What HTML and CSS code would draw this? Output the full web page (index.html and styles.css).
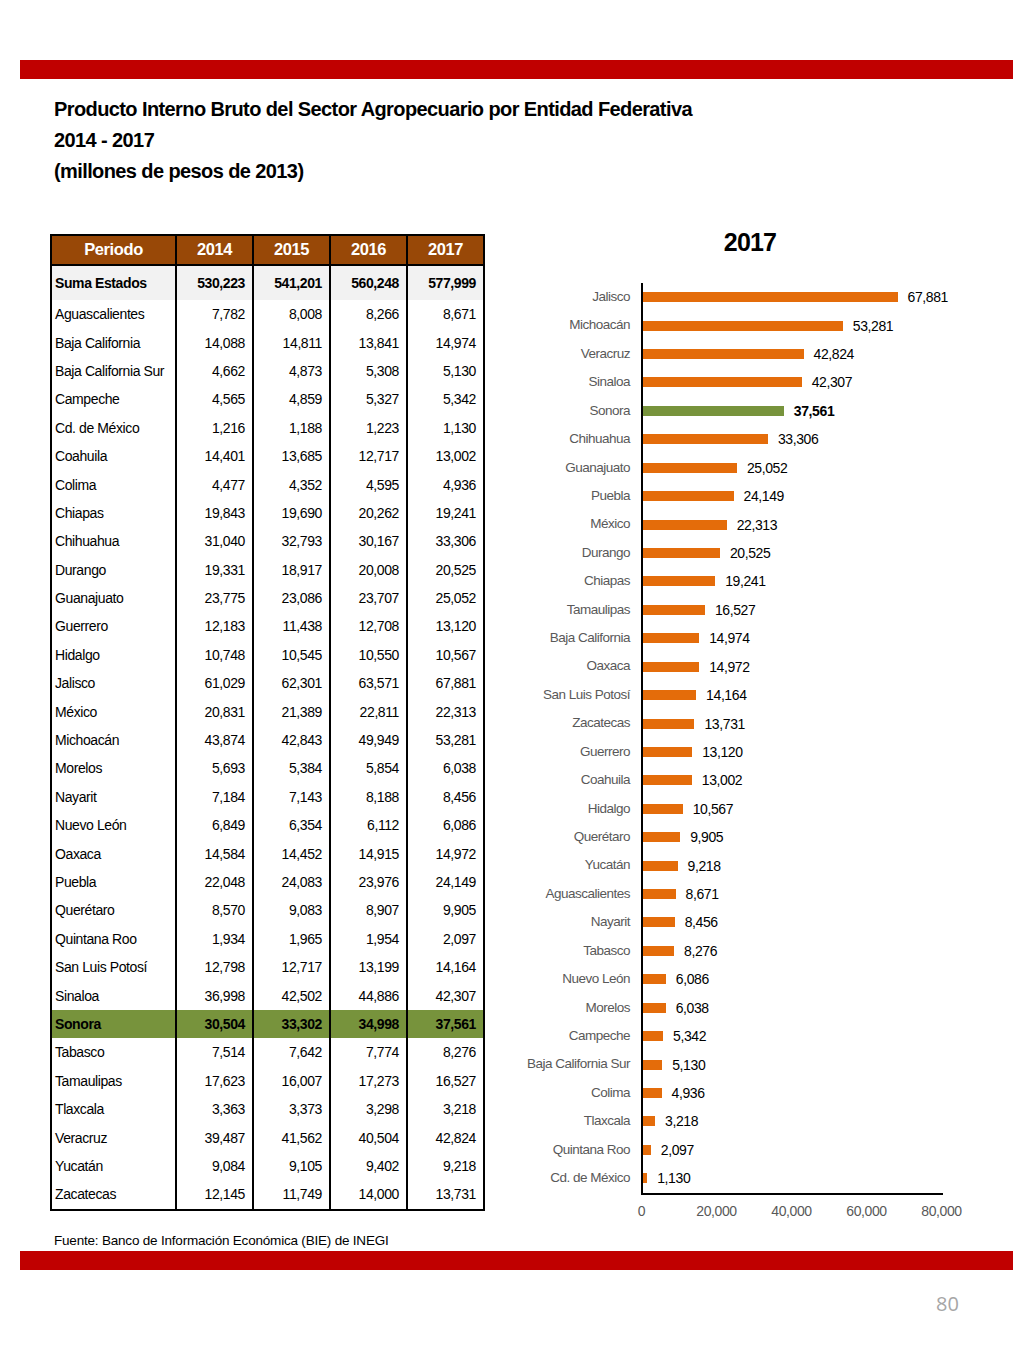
FILE: index.html
```html
<!DOCTYPE html>
<html lang="es">
<head>
<meta charset="utf-8">
<title>PIB Sector Agropecuario</title>
<link rel="stylesheet" href="styles.css">
</head>
<body>
<div class="page">
  <div class="redbar top"></div>
  <div class="heading">
    <div>Producto Interno Bruto del Sector Agropecuario por Entidad Federativa</div>
    <div>2014 - 2017</div>
    <div>(millones de pesos de 2013)</div>
  </div>
  <div class="main">
    <div class="left">
      <table class="data">
        <colgroup><col class="c0"><col class="cn"><col class="cn"><col class="cn"><col class="cn"></colgroup>
        <thead>
          <tr><th>Periodo</th><th>2014</th><th>2015</th><th>2016</th><th>2017</th></tr>
        </thead>
        <tbody>
          <tr class="total"><td>Suma Estados</td><td>530,223</td><td>541,201</td><td>560,248</td><td>577,999</td></tr>
          <tr><td>Aguascalientes</td><td>7,782</td><td>8,008</td><td>8,266</td><td>8,671</td></tr>
          <tr><td>Baja California</td><td>14,088</td><td>14,811</td><td>13,841</td><td>14,974</td></tr>
          <tr><td>Baja California Sur</td><td>4,662</td><td>4,873</td><td>5,308</td><td>5,130</td></tr>
          <tr><td>Campeche</td><td>4,565</td><td>4,859</td><td>5,327</td><td>5,342</td></tr>
          <tr><td>Cd. de México</td><td>1,216</td><td>1,188</td><td>1,223</td><td>1,130</td></tr>
          <tr><td>Coahuila</td><td>14,401</td><td>13,685</td><td>12,717</td><td>13,002</td></tr>
          <tr><td>Colima</td><td>4,477</td><td>4,352</td><td>4,595</td><td>4,936</td></tr>
          <tr><td>Chiapas</td><td>19,843</td><td>19,690</td><td>20,262</td><td>19,241</td></tr>
          <tr><td>Chihuahua</td><td>31,040</td><td>32,793</td><td>30,167</td><td>33,306</td></tr>
          <tr><td>Durango</td><td>19,331</td><td>18,917</td><td>20,008</td><td>20,525</td></tr>
          <tr><td>Guanajuato</td><td>23,775</td><td>23,086</td><td>23,707</td><td>25,052</td></tr>
          <tr><td>Guerrero</td><td>12,183</td><td>11,438</td><td>12,708</td><td>13,120</td></tr>
          <tr><td>Hidalgo</td><td>10,748</td><td>10,545</td><td>10,550</td><td>10,567</td></tr>
          <tr><td>Jalisco</td><td>61,029</td><td>62,301</td><td>63,571</td><td>67,881</td></tr>
          <tr><td>México</td><td>20,831</td><td>21,389</td><td>22,811</td><td>22,313</td></tr>
          <tr><td>Michoacán</td><td>43,874</td><td>42,843</td><td>49,949</td><td>53,281</td></tr>
          <tr><td>Morelos</td><td>5,693</td><td>5,384</td><td>5,854</td><td>6,038</td></tr>
          <tr><td>Nayarit</td><td>7,184</td><td>7,143</td><td>8,188</td><td>8,456</td></tr>
          <tr><td>Nuevo León</td><td>6,849</td><td>6,354</td><td>6,112</td><td>6,086</td></tr>
          <tr><td>Oaxaca</td><td>14,584</td><td>14,452</td><td>14,915</td><td>14,972</td></tr>
          <tr><td>Puebla</td><td>22,048</td><td>24,083</td><td>23,976</td><td>24,149</td></tr>
          <tr><td>Querétaro</td><td>8,570</td><td>9,083</td><td>8,907</td><td>9,905</td></tr>
          <tr><td>Quintana Roo</td><td>1,934</td><td>1,965</td><td>1,954</td><td>2,097</td></tr>
          <tr><td>San Luis Potosí</td><td>12,798</td><td>12,717</td><td>13,199</td><td>14,164</td></tr>
          <tr><td>Sinaloa</td><td>36,998</td><td>42,502</td><td>44,886</td><td>42,307</td></tr>
          <tr class="hl"><td>Sonora</td><td>30,504</td><td>33,302</td><td>34,998</td><td>37,561</td></tr>
          <tr><td>Tabasco</td><td>7,514</td><td>7,642</td><td>7,774</td><td>8,276</td></tr>
          <tr><td>Tamaulipas</td><td>17,623</td><td>16,007</td><td>17,273</td><td>16,527</td></tr>
          <tr><td>Tlaxcala</td><td>3,363</td><td>3,373</td><td>3,298</td><td>3,218</td></tr>
          <tr><td>Veracruz</td><td>39,487</td><td>41,562</td><td>40,504</td><td>42,824</td></tr>
          <tr><td>Yucatán</td><td>9,084</td><td>9,105</td><td>9,402</td><td>9,218</td></tr>
          <tr><td>Zacatecas</td><td>12,145</td><td>11,749</td><td>14,000</td><td>13,731</td></tr>
        </tbody>
      </table>
      <div class="source">Fuente: Banco de Información Económica (BIE) de INEGI</div>
    </div>

    <div class="chart">
      <div class="chart-title">2017</div>
      <div class="chart-body">
        <div class="labels">
          <div>Jalisco</div><div>Michoacán</div><div>Veracruz</div><div>Sinaloa</div><div>Sonora</div>
          <div>Chihuahua</div><div>Guanajuato</div><div>Puebla</div><div>México</div><div>Durango</div>
          <div>Chiapas</div><div>Tamaulipas</div><div>Baja California</div><div>Oaxaca</div><div>San Luis Potosí</div>
          <div>Zacatecas</div><div>Guerrero</div><div>Coahuila</div><div>Hidalgo</div><div>Querétaro</div>
          <div>Yucatán</div><div>Aguascalientes</div><div>Nayarit</div><div>Tabasco</div><div>Nuevo León</div>
          <div>Morelos</div><div>Campeche</div><div>Baja California Sur</div><div>Colima</div><div>Tlaxcala</div>
          <div>Quintana Roo</div><div>Cd. de México</div>
        </div>
        <div class="plot">
          <div class="row"><span class="bar" style="width:254.55px"></span><span class="val">67,881</span></div>
          <div class="row"><span class="bar" style="width:199.80px"></span><span class="val">53,281</span></div>
          <div class="row"><span class="bar" style="width:160.59px"></span><span class="val">42,824</span></div>
          <div class="row"><span class="bar" style="width:158.65px"></span><span class="val">42,307</span></div>
          <div class="row sel"><span class="bar" style="width:140.85px"></span><span class="val">37,561</span></div>
          <div class="row"><span class="bar" style="width:124.90px"></span><span class="val">33,306</span></div>
          <div class="row"><span class="bar" style="width:93.95px"></span><span class="val">25,052</span></div>
          <div class="row"><span class="bar" style="width:90.56px"></span><span class="val">24,149</span></div>
          <div class="row"><span class="bar" style="width:83.67px"></span><span class="val">22,313</span></div>
          <div class="row"><span class="bar" style="width:76.97px"></span><span class="val">20,525</span></div>
          <div class="row"><span class="bar" style="width:72.15px"></span><span class="val">19,241</span></div>
          <div class="row"><span class="bar" style="width:61.98px"></span><span class="val">16,527</span></div>
          <div class="row"><span class="bar" style="width:56.15px"></span><span class="val">14,974</span></div>
          <div class="row"><span class="bar" style="width:56.15px"></span><span class="val">14,972</span></div>
          <div class="row"><span class="bar" style="width:53.12px"></span><span class="val">14,164</span></div>
          <div class="row"><span class="bar" style="width:51.49px"></span><span class="val">13,731</span></div>
          <div class="row"><span class="bar" style="width:49.20px"></span><span class="val">13,120</span></div>
          <div class="row"><span class="bar" style="width:48.76px"></span><span class="val">13,002</span></div>
          <div class="row"><span class="bar" style="width:39.63px"></span><span class="val">10,567</span></div>
          <div class="row"><span class="bar" style="width:37.14px"></span><span class="val">9,905</span></div>
          <div class="row"><span class="bar" style="width:34.57px"></span><span class="val">9,218</span></div>
          <div class="row"><span class="bar" style="width:32.52px"></span><span class="val">8,671</span></div>
          <div class="row"><span class="bar" style="width:31.71px"></span><span class="val">8,456</span></div>
          <div class="row"><span class="bar" style="width:31.04px"></span><span class="val">8,276</span></div>
          <div class="row"><span class="bar" style="width:22.82px"></span><span class="val">6,086</span></div>
          <div class="row"><span class="bar" style="width:22.64px"></span><span class="val">6,038</span></div>
          <div class="row"><span class="bar" style="width:20.03px"></span><span class="val">5,342</span></div>
          <div class="row"><span class="bar" style="width:19.24px"></span><span class="val">5,130</span></div>
          <div class="row"><span class="bar" style="width:18.51px"></span><span class="val">4,936</span></div>
          <div class="row"><span class="bar" style="width:12.07px"></span><span class="val">3,218</span></div>
          <div class="row"><span class="bar" style="width:7.86px"></span><span class="val">2,097</span></div>
          <div class="row"><span class="bar" style="width:4.24px"></span><span class="val">1,130</span></div>
        </div>
      </div>
      <div class="ticks">
        <span>0</span><span>20,000</span><span>40,000</span><span>60,000</span><span>80,000</span>
      </div>
    </div>
  </div>
  <div class="redbar bottom"></div>
  <div class="pagenum">80</div>
</div>
</body>
</html>
```

FILE: styles.css
```css
html, body {
  margin: 0;
  padding: 0;
  background: #ffffff;
}

body {
  font-family: "Liberation Sans Narrow", "Arial Narrow", "Liberation Sans", Arial, sans-serif;
  color: #000;
}

.page {
  width: 1024px;
  height: 1365px;
  padding-top: 60px;
  box-sizing: border-box;
}

.redbar {
  height: 19px;
  margin: 0 11px 0 20px;
  background: #c00000;
}

.heading {
  margin-top: 15px;
  padding-left: 54px;
  font-size: 20px;
  letter-spacing: -0.6px;
  font-weight: bold;
  line-height: 31px;
}

.main {
  display: flex;
  margin-top: 39px;
}

.left {
  margin-left: 50px;
  width: 433px;
  padding-top: 8px;
}

table.data {
  border-collapse: collapse;
  width: 433px;
  table-layout: fixed;
  border: 2px solid #000;
  font-size: 14px;
  letter-spacing: -0.4px;
}

col.c0 { width: 125px; }
col.cn { width: 77px; }

table.data th {
  background: #984807;
  color: #fff;
  font-size: 16.5px;
  letter-spacing: -0.4px;
  font-weight: bold;
  height: 26px;
  padding: 0 0 2px;
  border: 2px solid #000;
  text-align: center;
}

table.data td {
  height: 28.4px;
  padding: 0 7px 0 3px;
  border-left: 2px solid #000;
  border-right: 2px solid #000;
  text-align: right;
  white-space: nowrap;
  line-height: 18px;
}

table.data td:first-child {
  text-align: left;
}

table.data tr.total td {
  height: 34px;
  background: #f2f2f2;
  font-weight: bold;
}

table.data tr.hl td {
  background: #77933c;
  font-weight: bold;
}

.source {
  margin-top: 20px;
  padding-left: 4px;
  font-size: 13.5px;
  letter-spacing: -0.2px;
  line-height: 20px;
}

.chart {
  margin-left: 17px;
  width: 460px;
}

.chart-title {
  font-size: 25px;
  letter-spacing: -0.8px;
  font-weight: bold;
  line-height: 32px;
  padding-left: 80px;
  width: 420px;
  box-sizing: border-box;
  text-align: center;
}

.chart-body {
  display: flex;
  margin-top: 25px;
}

.labels {
  width: 130px;
  margin-right: 12px;
  text-align: right;
  color: #595959;
  font-size: 13.5px;
  letter-spacing: -0.5px;
}

.labels div {
  height: 28.43px;
  line-height: 28.43px;
  white-space: nowrap;
}

.plot {
  width: 300px;
  border-left: 2px solid #000;
  border-bottom: 2px solid #000;
  margin-left: -1px;
}

.plot .row {
  height: 28.43px;
  display: flex;
  align-items: center;
}

.bar {
  display: block;
  height: 10px;
  background: #e46c0a;
  flex: none;
}

.val {
  margin-left: 10px;
  font-size: 14px;
  letter-spacing: -0.4px;
  white-space: nowrap;
}

.row.sel .bar { background: #77933c; }
.row.sel .val { font-weight: bold; }

.ticks {
  display: flex;
  margin-left: 104px;
  margin-top: 8px;
  color: #595959;
  font-size: 14px;
  letter-spacing: -0.4px;
}

.ticks span {
  width: 75px;
  text-align: center;
  flex: none;
}

.pagenum {
  margin-top: 20px;
  padding-left: 936px;
  font-family: "Open Sans", "Liberation Sans", sans-serif;
  font-size: 20px;
  color: #a6a6a6;
  line-height: 28px;
}
```
